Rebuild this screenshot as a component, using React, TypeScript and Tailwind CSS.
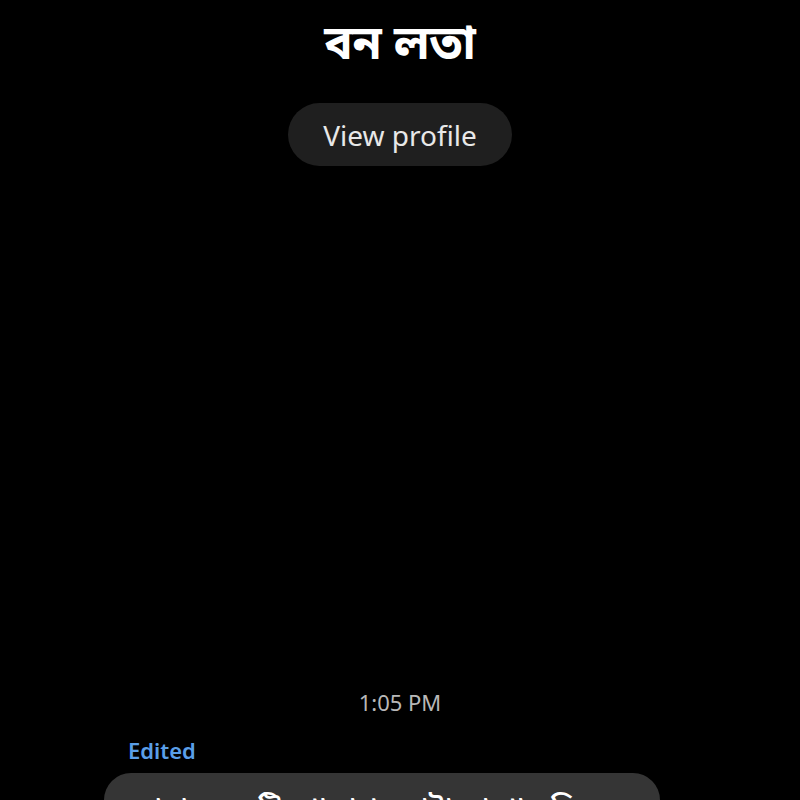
export default function App() {
  return (
    <div
      className="h-[800px] w-[800px] overflow-hidden bg-black flex flex-col"
      style={{ fontFamily: '"Noto Sans", "Noto Sans Bengali", "Lohit Bengali", "FreeSans", sans-serif' }}
    >
      <div className="flex flex-col items-center pt-[12px]">
        <h1 className="text-[47px] font-bold leading-[58px] text-white">বন লতা</h1>
        <button className="mt-[33px] h-[63px] w-[224px] rounded-full bg-[#1f1f1f] text-[28px] text-[#e8e8e8]">
          View profile
        </button>
      </div>

      <div className="flex-1" />

      <div className="flex flex-col">
        <div className="text-center text-[22px] leading-[30px] text-[#b8b8b8]">1:05 PM</div>
        <div className="mt-[20px] pl-[128px] text-[22px] font-semibold leading-[26px] text-[#5a9fe8]">Edited</div>
        <div className="ml-[104px] mt-[10px] h-[27px] w-[556px] overflow-hidden rounded-t-[30px] bg-[#353535] px-[24px] pt-[17px]">
          <p className="whitespace-nowrap text-[29px] font-semibold leading-[34px] text-white">আমার একটি গোলাপ ফোটানো গাছ ছিল</p>
        </div>
      </div>
    </div>
  );
}
